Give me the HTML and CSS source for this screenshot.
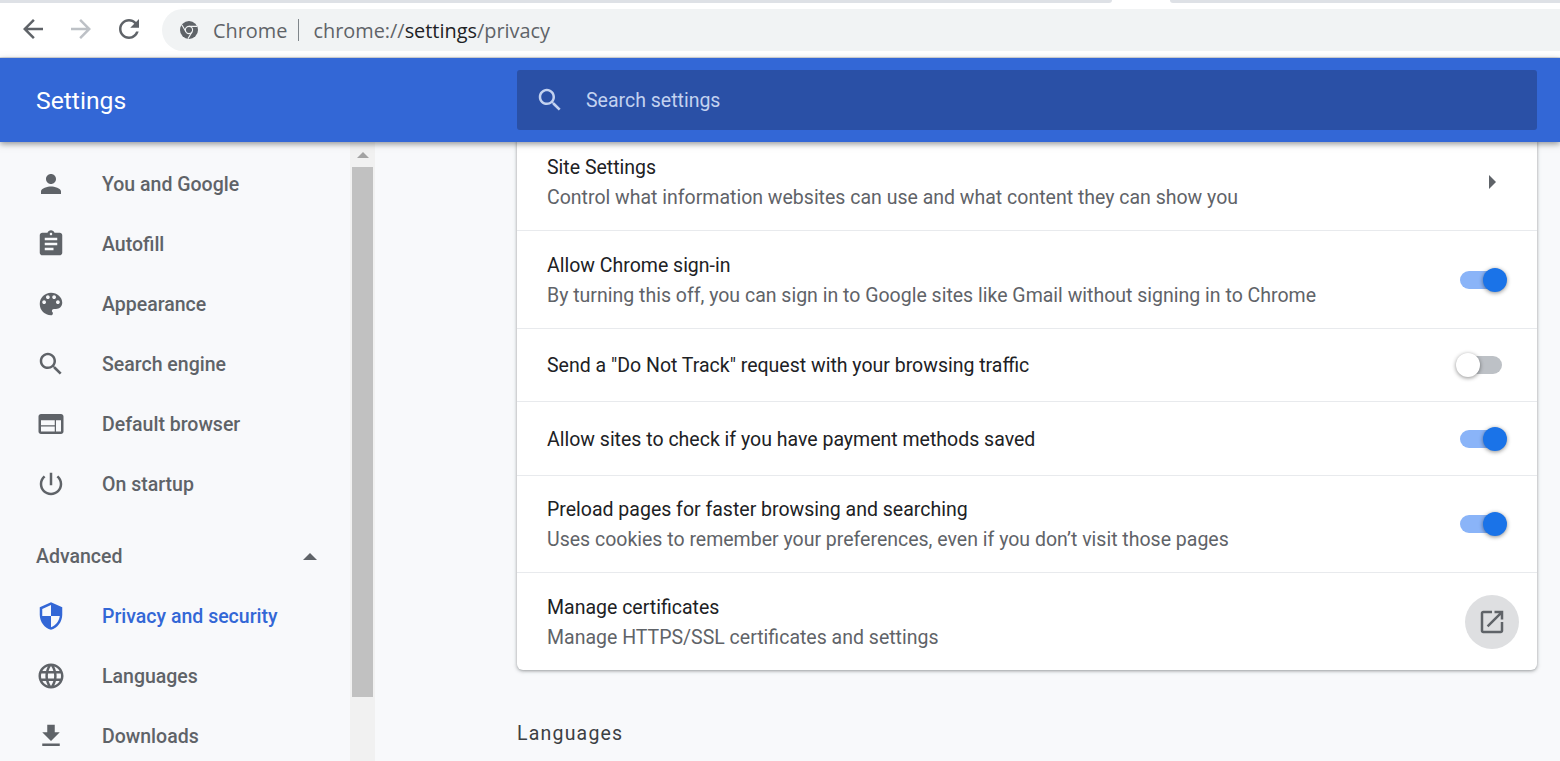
FILE: index.html
```html
<!DOCTYPE html>
<html lang="en">
<head>
<meta charset="utf-8">
<title>Settings - Privacy and security</title>
<link rel="stylesheet" href="styles.css">
</head>
<body>
<div class="page">
  <div class="tabstrip">
    <div class="tab-edge tab-edge-left"></div>
    <div class="tab-edge tab-edge-right"></div>
  </div>
  <div class="toolbar">
    <svg class="tool-icon" viewBox="0 0 24 24"><path fill="#5f6368" d="M20 11H7.83l5.59-5.59L12 4l-8 8 8 8 1.41-1.41L7.83 13H20v-2z"/></svg>
    <svg class="tool-icon" viewBox="0 0 24 24"><path fill="#bdc1c6" d="M12 4l-1.41 1.41L16.17 11H4v2h12.17l-5.58 5.59L12 20l8-8z"/></svg>
    <svg class="tool-icon" viewBox="0 0 24 24"><path fill="#5f6368" d="M17.65 6.35C16.2 4.9 14.21 4 12 4c-4.42 0-7.99 3.58-7.99 8s3.57 8 7.99 8c3.73 0 6.84-2.55 7.73-6h-2.08c-.82 2.33-3.04 4-5.65 4-3.31 0-6-2.69-6-6s2.69-6 6-6c1.66 0 3.14.69 4.22 1.78L13 11h7V4l-2.35 2.35z"/></svg>
    <div class="omnibox">
      <svg class="chrome-icon" viewBox="0 0 18 18">
        <circle cx="9" cy="9" r="9" fill="#5f6368"/>
        <circle cx="9" cy="9" r="3.6" fill="none" stroke="#f1f3f4" stroke-width="1.1"/>
        <path d="M9 5.4h8M5.9 10.8 2 4M12.1 10.8 8 17.6" fill="none" stroke="#f1f3f4" stroke-width="1.1"/>
      </svg>
      <span class="omni-chip">Chrome</span>
      <span class="omni-sep"></span>
      <span class="omni-url">chrome://<b class="omni-host">settings</b>/privacy</span>
    </div>
  </div>
  <header class="header">
    <h1 class="header-title">Settings</h1>
    <div class="search">
      <svg class="search-icon" viewBox="0 0 24 24"><path fill="#c3d2f0" d="M15.5 14h-.79l-.28-.27C15.41 12.59 16 11.11 16 9.5 16 5.91 13.09 3 9.5 3S3 5.91 3 9.5 5.91 16 9.5 16c1.61 0 3.09-.59 4.23-1.57l.27.28v.79l5 4.99L20.49 19l-4.99-5zm-6 0C7.01 14 5 11.99 5 9.5S7.01 5 9.5 5 14 7.01 14 9.5 11.99 14 9.5 14z"/></svg>
      <span class="search-text">Search settings</span>
    </div>
  </header>
  <div class="body">
    <nav class="sidebar">
      <a class="nav-item"><svg class="nav-icon" viewBox="0 0 24 24"><path d="M12 12c2.21 0 4-1.79 4-4s-1.79-4-4-4-4 1.79-4 4 1.79 4 4 4zm0 2c-2.67 0-8 1.34-8 4v2h16v-2c0-2.66-5.33-4-8-4z"/></svg>You and Google</a>
      <a class="nav-item"><svg class="nav-icon" viewBox="0 0 24 24"><path d="M19 3h-4.18C14.4 1.84 13.3 1 12 1c-1.3 0-2.4.84-2.82 2H5c-1.1 0-2 .9-2 2v14c0 1.1.9 2 2 2h14c1.1 0 2-.9 2-2V5c0-1.1-.9-2-2-2zm-7 0c.55 0 1 .45 1 1s-.45 1-1 1-1-.45-1-1 .45-1 1-1zm2 14H7v-2h7v2zm3-4H7v-2h10v2zm0-4H7V7h10v2z"/></svg>Autofill</a>
      <a class="nav-item"><svg class="nav-icon" viewBox="0 0 24 24"><path d="M12 3c-4.97 0-9 4.03-9 9s4.03 9 9 9c.83 0 1.5-.67 1.5-1.5 0-.39-.15-.74-.39-1.01-.23-.26-.38-.61-.38-.99 0-.83.67-1.5 1.5-1.5H16c2.76 0 5-2.24 5-5 0-4.42-4.03-8-9-8zm-5.5 9c-.83 0-1.5-.67-1.5-1.5S5.67 9 6.5 9 8 9.67 8 10.5 7.33 12 6.5 12zm3-4C8.67 8 8 7.33 8 6.5S8.67 5 9.5 5s1.5.67 1.5 1.5S10.33 8 9.5 8zm5 0c-.83 0-1.5-.67-1.5-1.5S13.67 5 14.5 5s1.5.67 1.5 1.5S15.33 8 14.5 8zm3 4c-.83 0-1.5-.67-1.5-1.5S16.67 9 17.5 9s1.5.67 1.5 1.5-.67 1.5-1.5 1.5z"/></svg>Appearance</a>
      <a class="nav-item"><svg class="nav-icon" viewBox="0 0 24 24"><path d="M15.5 14h-.79l-.28-.27C15.41 12.59 16 11.11 16 9.5 16 5.91 13.09 3 9.5 3S3 5.91 3 9.5 5.91 16 9.5 16c1.61 0 3.09-.59 4.23-1.57l.27.28v.79l5 4.99L20.49 19l-4.99-5zm-6 0C7.01 14 5 11.99 5 9.5S7.01 5 9.5 5 14 7.01 14 9.5 11.99 14 9.5 14z"/></svg>Search engine</a>
      <a class="nav-item"><svg class="nav-icon" viewBox="0 0 24 24"><path d="M20 4H4c-1.1 0-2 .9-2 2v12c0 1.1.9 2 2 2h16c1.1 0 2-.9 2-2V6c0-1.1-.9-2-2-2zm-5 14H4v-4h11v4zm0-5H4V9h11v4zm5 5h-4V9h4v9z"/></svg>Default browser</a>
      <a class="nav-item"><svg class="nav-icon" viewBox="0 0 24 24"><path d="M13 3h-2v10h2V3zm4.83 2.17l-1.42 1.42C17.99 7.86 19 9.81 19 12c0 3.87-3.13 7-7 7s-7-3.13-7-7c0-2.19 1.01-4.14 2.58-5.42L6.17 5.17C4.23 6.82 3 9.26 3 12c0 4.97 4.03 9 9 9s9-4.03 9-9c0-2.74-1.23-5.18-3.17-6.83z"/></svg>On startup</a>
      <div class="nav-advanced"><span>Advanced</span><span class="nav-caret"></span></div>
      <a class="nav-item nav-item-active"><svg class="nav-icon" viewBox="0 0 24 24"><path d="M12 1L3 5v6c0 5.55 3.84 10.74 9 12 5.16-1.26 9-6.45 9-12V5l-9-4zm0 10.99h7c-.53 4.12-3.28 7.79-7 8.94V12H5V6.3l7-3.11v8.8z"/></svg>Privacy and security</a>
      <a class="nav-item"><svg class="nav-icon" viewBox="0 0 24 24"><path d="M11.99 2C6.47 2 2 6.48 2 12s4.47 10 9.99 10C17.52 22 22 17.52 22 12S17.52 2 11.99 2zm6.93 6h-2.95c-.32-1.25-.78-2.45-1.38-3.56 1.84.63 3.37 1.91 4.33 3.56zM12 4.04c.83 1.2 1.48 2.53 1.91 3.96h-3.82c.43-1.43 1.08-2.76 1.91-3.96zM4.26 14C4.1 13.36 4 12.69 4 12s.1-1.36.26-2h3.38c-.08.66-.14 1.32-.14 2 0 .68.06 1.34.14 2H4.26zm.82 2h2.95c.32 1.25.78 2.45 1.38 3.56-1.84-.63-3.37-1.9-4.33-3.56zm2.95-8H5.08c.96-1.66 2.49-2.93 4.33-3.56C8.81 5.55 8.35 6.75 8.03 8zM12 19.96c-.83-1.2-1.48-2.53-1.91-3.96h3.82c-.43 1.43-1.08 2.76-1.91 3.96zM14.34 14H9.66c-.09-.66-.16-1.32-.16-2 0-.68.07-1.35.16-2h4.68c.09.65.16 1.32.16 2 0 .68-.07 1.34-.16 2zm.25 5.56c.6-1.11 1.06-2.31 1.38-3.56h2.95c-.96 1.65-2.49 2.93-4.33 3.56zM16.36 14c.08-.66.14-1.32.14-2 0-.68-.06-1.34-.14-2h3.38c.16.64.26 1.31.26 2s-.1 1.36-.26 2h-3.38z"/></svg>Languages</a>
      <a class="nav-item"><svg class="nav-icon" viewBox="0 0 24 24"><path d="M19 9h-4V3H9v6H5l7 7 7-7zM5 18v2h14v-2H5z"/></svg>Downloads</a>
    </nav>
    <div class="scrollbar">
      <div class="scroll-btn"><span class="scroll-arrow"></span></div>
      <div class="scroll-thumb"></div>
    </div>
    <main class="main">
      <section class="card">
        <div class="row row-tall">
          <div class="row-text"><div class="row-title">Site Settings</div><div class="row-sub">Control what information websites can use and what content they can show you</div></div>
          <span class="row-arrow"></span>
        </div>
        <div class="row row-tall">
          <div class="row-text"><div class="row-title">Allow Chrome sign-in</div><div class="row-sub">By turning this off, you can sign in to Google sites like Gmail without signing in to Chrome</div></div>
          <span class="toggle toggle-on"><span class="knob"></span></span>
        </div>
        <div class="row row-single">
          <div class="row-text"><div class="row-title">Send a "Do Not Track" request with your browsing traffic</div></div>
          <span class="toggle"><span class="knob"></span></span>
        </div>
        <div class="row row-single">
          <div class="row-text"><div class="row-title">Allow sites to check if you have payment methods saved</div></div>
          <span class="toggle toggle-on"><span class="knob"></span></span>
        </div>
        <div class="row row-double">
          <div class="row-text"><div class="row-title">Preload pages for faster browsing and searching</div><div class="row-sub">Uses cookies to remember your preferences, even if you don’t visit those pages</div></div>
          <span class="toggle toggle-on"><span class="knob"></span></span>
        </div>
        <div class="row row-double row-last">
          <div class="row-text"><div class="row-title">Manage certificates</div><div class="row-sub">Manage HTTPS/SSL certificates and settings</div></div>
          <span class="open-btn"><svg class="open-icon" viewBox="0 0 24 24"><path d="M19 19H5V5h7V3H5c-1.11 0-2 .9-2 2v14c0 1.1.89 2 2 2h14c1.1 0 2-.9 2-2v-7h-2v7zM14 3v2h3.59l-9.83 9.83 1.41 1.41L19 6.41V10h2V3h-7z"/></svg></span>
        </div>
      </section>
      <h2 class="section-title">Languages</h2>
    </main>
  </div>
</div>
</body>
</html>
```
FILE: styles.css
```css
* { box-sizing: border-box; }
html, body { margin: 0; height: 100%; overflow: hidden; }
body { font-family: Roboto, "Liberation Sans", sans-serif; background: #f8f9fb; }
.page { width: 1560px; height: 761px; display: flex; flex-direction: column; overflow: hidden; }

.tabstrip { height: 3px; flex: none; background: #fff; display: flex; justify-content: space-between; }
.tab-edge { height: 3px; background: #dee1e6; }
.tab-edge-left { width: 1112px; border-bottom-right-radius: 6px; }
.tab-edge-right { width: 390px; border-bottom-left-radius: 6px; }

.toolbar { height: 55px; flex: none; background: #fff; border-bottom: 1px solid #dadce0; display: flex; align-items: center; padding-left: 18px; }
.tool-icon { width: 30px; height: 30px; flex: none; margin: 0 18px 2px 0; }
.omnibox { flex: 1; height: 42px; background: #f1f3f4; border-radius: 21px 0 0 21px; display: flex; align-items: center; padding-left: 18px; font-family: "Open Sans", "Noto Sans", sans-serif; font-size: 19.9px; color: #5f6368; }
.chrome-icon { width: 18px; height: 18px; flex: none; margin-right: 15px; }
.omni-sep { width: 1px; height: 22px; background: #80868b; margin: 0 14px 0 11px; }
.omni-host { font-weight: 400; color: #202124; }

.header { height: 84px; flex: none; background: #3367d6; display: flex; align-items: center; box-shadow: 0 2px 6px rgba(60,64,67,.55); position: relative; z-index: 2; }
.header-title { margin: 0; width: 517px; padding-left: 36px; font-size: 24.7px; font-weight: 400; color: #fff; flex: none; }
.search { width: 1020px; height: 60px; flex: none; background: #2a50a6; border-radius: 3px; display: flex; align-items: center; padding-left: 18px; }
.search-icon { width: 30px; height: 30px; flex: none; margin-right: 21px; }
.search-text { font-size: 19.5px; color: #c3d2f0; }

.body { flex: 1; min-height: 0; display: flex; }
.sidebar { width: 350px; flex: none; padding-top: 12px; }
.nav-item { height: 60px; display: flex; align-items: center; padding-left: 36px; font-size: 19.5px; font-weight: 500; color: #5f6368; }
.nav-icon { width: 30px; height: 30px; flex: none; margin-right: 36px; fill: #5f6368; }
.nav-item-active { color: #3367d6; }
.nav-item-active .nav-icon { fill: #3367d6; }
.nav-advanced { height: 72px; padding: 12px 33px 0 36px; display: flex; align-items: center; justify-content: space-between; font-size: 19.5px; font-weight: 500; color: #5f6368; }
.nav-caret { width: 0; height: 0; border-left: 7px solid transparent; border-right: 7px solid transparent; border-bottom: 7px solid #5f6368; }

.scrollbar { width: 25px; flex: none; background: #f1f1f1; padding: 0 2px 0; display: flex; flex-direction: column; }
.scroll-btn { height: 25px; flex: none; display: flex; justify-content: center; align-items: center; }
.scroll-arrow { width: 0; height: 0; border-left: 6px solid transparent; border-right: 6px solid transparent; border-bottom: 6px solid #a3a3a3; }
.scroll-thumb { width: 21px; height: 530px; flex: none; background: #c1c1c1; }

.main { flex: 1; min-width: 0; padding-left: 142px; padding-right: 23px; overflow: hidden; }
.card { margin-top: -9px; background: #fff; border-radius: 0 0 6px 6px; box-shadow: 0 1px 3px rgba(60,64,67,.4), 0 1px 4px 1px rgba(60,64,67,.12); }
.row { display: flex; align-items: center; justify-content: space-between; padding: 0 30px; border-bottom: 1px solid #e8eaed; }
.row-tall { height: 98px; }
.row-double { height: 97px; }
.row-single { height: 73px; }
.row-single + .row-single { height: 74px; }
.row-last { border-bottom: 0; }
.row-text { padding-top: 2px; }
.row-title { font-size: 19.5px; line-height: 30px; color: #202124; }
.row-sub { font-size: 19.5px; line-height: 30px; color: #5f6368; }
.row-arrow { width: 0; height: 0; border-top: 7px solid transparent; border-bottom: 7px solid transparent; border-left: 7px solid #5f6368; margin-right: 11px; }

.toggle { position: relative; width: 42px; height: 18px; border-radius: 9px; background: #bdc1c6; flex: none; margin-right: 5px; }
.toggle-on { background: #8ab4f8; }
.knob { position: absolute; top: -3px; left: -4px; width: 24px; height: 24px; border-radius: 50%; background: #fff; box-shadow: 0 1px 4px rgba(0,0,0,.45); }
.toggle-on .knob { left: 23px; background: #1a73e8; }

.open-btn { width: 54px; height: 54px; border-radius: 50%; background: #dedfe1; display: flex; align-items: center; justify-content: center; flex: none; margin-right: -12px; }
.open-icon { width: 30px; height: 30px; fill: #5f6368; }

.section-title { margin: 49.5px 0 0; font-size: 19.5px; line-height: 28px; font-weight: 400; letter-spacing: 1.2px; color: #3c4043; }
```
